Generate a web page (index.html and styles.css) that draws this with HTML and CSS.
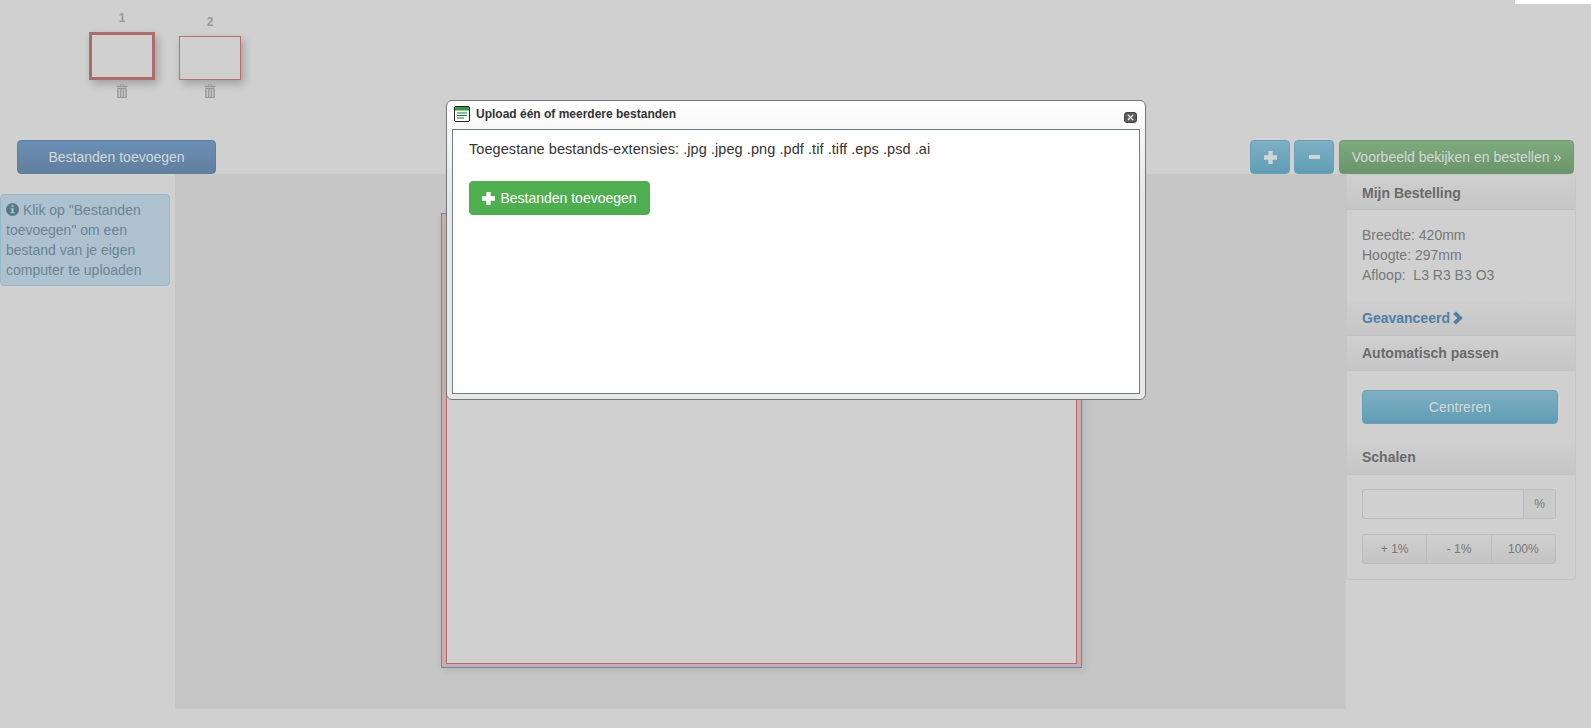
FILE: index.html
```html
<!DOCTYPE html>
<html lang="nl">
<head>
  <meta charset="UTF-8" />
  <meta name="viewport" content="width=device-width, initial-scale=1.0"/>
  <title>Bestanden uploaden</title>
  <link rel="stylesheet" href="styles.css">
</head>
<body>
  <div class="corner-tab"></div>

  <div class="thumbs">
    <div class="thumb">
      <span class="thumb-num">1</span>
      <div class="thumb-page thumb-active"></div>
      <svg class="trash" viewBox="0 0 12 14"><path d="M4 0.5h4v1.2h3.5v1.3H0.5V1.7H4zM5 1v.7h2V1zM1.2 3.8h9.6V14H1.2zM2.6 5v8h1.2V5zM5.4 5v8h1.2V5zM8.2 5v8h1.2V5z" fill-rule="evenodd"/></svg>
    </div>
    <div class="thumb">
      <span class="thumb-num">2</span>
      <div class="thumb-page thumb-small"></div>
      <svg class="trash" viewBox="0 0 12 14"><path d="M4 0.5h4v1.2h3.5v1.3H0.5V1.7H4zM5 1v.7h2V1zM1.2 3.8h9.6V14H1.2zM2.6 5v8h1.2V5zM5.4 5v8h1.2V5zM8.2 5v8h1.2V5z" fill-rule="evenodd"/></svg>
    </div>
  </div>

  <div class="toolbar">
    <button class="btn btn-blue btn-add">Bestanden toevoegen</button>
    <div class="toolbar-right">
      <button class="btn btn-info btn-zoom">
        <svg class="icon-plus" viewBox="1 1 12 12"><path d="M5 1h4v4h4v4H9v4H5V9H1V5h4z"/></svg>
      </button>
      <button class="btn btn-info btn-zoom">
        <svg class="icon-minus" viewBox="0 0 11 4"><path d="M0 0h11v4H0z"/></svg>
      </button>
      <button class="btn btn-green btn-order">Voorbeeld bekijken en bestellen »</button>
    </div>
  </div>

  <div class="main">
    <div class="hint">
      <svg class="hint-icon" viewBox="0 0 14 14"><path fill-rule="evenodd" d="M7 0a7 7 0 1 1 0 14A7 7 0 0 1 7 0zM5.8 2.4v2h2.4v-2zM5 5.6v1.2h.9v3H5V11h4V9.8h-.9V5.6z"/></svg>
      Klik op "Bestanden toevoegen" om een bestand van je eigen computer te uploaden
    </div>

    <div class="canvas">
      <div class="sheet"><div class="sheet-inner"></div></div>
    </div>

    <div class="panel">
      <div class="panel-head panel-first">Mijn Bestelling</div>
      <div class="panel-body specs">
        <div>Breedte: 420mm</div>
        <div>Hoogte: 297mm</div>
        <div>Afloop:&nbsp; L3 R3 B3 O3</div>
      </div>
      <div class="panel-head panel-link">Geavanceerd
        <svg viewBox="0 0 10 14"><path d="M3 0.4L9.8 7 3 13.6 0.2 11 4.4 7 0.2 3z"/></svg>
      </div>
      <div class="panel-head">Automatisch passen</div>
      <div class="panel-body center-body">
        <button class="btn btn-info btn-center">Centreren</button>
      </div>
      <div class="panel-head">Schalen</div>
      <div class="panel-body scale-body">
        <div class="scale-input">
          <span class="scale-field"></span>
          <span class="scale-unit">%</span>
        </div>
        <div class="scale-btns">
          <span>+ 1%</span>
          <span>- 1%</span>
          <span>100%</span>
        </div>
      </div>
    </div>
  </div>

  <div class="modal">
    <div class="modal-title">
      <svg class="modal-icon" viewBox="0 0 16 16">
        <rect x="0.5" y="0.5" width="15" height="15" rx="1.5" fill="#fff" stroke="#222"/>
        <rect x="1" y="1" width="14" height="3.5" fill="#2f9e3f"/>
        <path d="M3 7h10M3 9.5h10M3 12h7" stroke="#1c7a2c" stroke-width="1.1"/>
      </svg>
      <span>Upload één of meerdere bestanden</span>
      <button class="modal-close">
        <svg viewBox="0 0 8 8"><path d="M1 1l6 6M7 1L1 7" stroke="#fff" stroke-width="1.5"/></svg>
      </button>
    </div>
    <div class="modal-body">
      <p class="extensions">Toegestane bestands-extensies: .jpg .jpeg .png .pdf .tif .tiff .eps .psd .ai</p>
      <button class="btn-upload">
        <svg viewBox="1 1 12 12"><path d="M5 1h4v4h4v4H9v4H5V9H1V5h4z"/></svg>
        Bestanden toevoegen
      </button>
    </div>
  </div>
</body>
</html>
```

FILE: styles.css
```css
body {
  margin: 0;
  height: 728px;
  overflow: hidden;
  background: #d0d0d0;
  font-family: "Liberation Sans", Arial, sans-serif;
  font-size: 14px;
  color: #666;
}
.corner-tab {
  position: absolute;
  top: 0;
  right: 0;
  width: 76px;
  height: 4px;
  background: #fff;
}

/* Thumbnails */
.thumbs {
  box-sizing: border-box;
  height: 140px;
  padding: 0 0 42px 89px;
  display: flex;
  align-items: flex-end;
  gap: 24px;
}
.thumb {
  display: flex;
  flex-direction: column;
  align-items: center;
}
.thumb-num {
  font-size: 12px;
  font-weight: bold;
  color: #999;
  line-height: 14px;
  margin-bottom: 7px;
}
.thumb-page {
  box-sizing: border-box;
  box-shadow: 3px 4px 8px rgba(0,0,0,0.22);
}
.thumb-active {
  width: 66px;
  height: 48px;
  border: 3px solid #ad6c6c;
}
.thumb-small {
  width: 62px;
  height: 44px;
  border: 1px solid #b56f6f;
}
.trash {
  width: 12px;
  height: 14px;
  margin-top: 4px;
  fill: #999;
}

/* Toolbar */
.toolbar {
  height: 34px;
  padding: 0 17px;
  display: flex;
  justify-content: space-between;
}
.toolbar-right {
  display: flex;
  gap: 4px;
}
.btn {
  box-sizing: border-box;
  height: 34px;
  padding: 0;
  border-radius: 4px;
  font-family: inherit;
  font-size: 14px;
  color: #d4d8da;
  display: flex;
  align-items: center;
  justify-content: center;
}
.btn-blue {
  background: linear-gradient(#6a8fb5, #607f9e);
  border: 1px solid #5f7f9f;
}
.btn-info {
  background: linear-gradient(#7fb0c4, #5f9db5);
  border: 1px solid #68a0b5;
}
.btn-green {
  background: linear-gradient(#7eab7e, #6b946b);
  border: 1px solid #6f9a6f;
}
.btn-add { width: 199px; }
.btn-zoom { width: 40px; }
.btn-zoom svg { fill: #d0d6d8; }
.icon-plus {
  width: 13px;
  height: 13px;
}
.icon-minus {
  width: 11px;
  height: 4px;
}
.btn-order {
  width: 235px;
  margin-left: 1px;
}

/* Main row */
.main {
  height: 535px;
  display: flex;
}
.hint {
  box-sizing: border-box;
  width: 170px;
  height: 92px;
  margin-top: 20px;
  padding: 5px 5px;
  background: #adc2ce;
  border: 1px solid #95b9c9;
  border-radius: 4px;
  line-height: 20px;
  color: #6b8494;
}
.hint-icon {
  width: 13px;
  height: 13px;
  fill: #55788c;
  vertical-align: -1px;
}
.canvas {
  box-sizing: border-box;
  width: 1171px;
  margin-left: 5px;
  padding: 39px 0 0 266px;
  background: #c6c6c6;
}
.sheet {
  box-sizing: border-box;
  width: 641px;
  height: 455px;
  padding: 3px 4px;
  background: #c9acac;
  border: 1px solid #5a8cbc;
  box-shadow: 2px 2px 8px rgba(0,0,0,0.1);
}
.sheet-inner {
  box-sizing: border-box;
  height: 100%;
  background: #d0d0d0;
  border: 1px solid #b06a6a;
}

/* Order panel */
.panel {
  box-sizing: border-box;
  width: 230px;
  height: 406px;
  border: 1px solid #c6c6c6;
  border-radius: 4px;
  overflow: hidden;
}
.panel-head {
  box-sizing: border-box;
  height: 35px;
  padding-left: 15px;
  display: flex;
  align-items: center;
  gap: 3px;
  font-weight: bold;
  color: #6a6a6a;
  background: linear-gradient(#cfcfcf, #c6c6c6);
  border-bottom: 1px solid #c2c2c2;
}
.panel-first { padding-top: 2px; }
.panel-link { color: #4f7ea8; }
.panel-link svg {
  width: 10px;
  height: 14px;
  fill: #4f7ea8;
}
.panel-body { padding: 0 15px; }
.specs {
  height: 91px;
  padding-top: 15px;
  box-sizing: border-box;
  line-height: 20px;
  color: #777;
}
.center-body {
  height: 69px;
  padding-top: 19px;
  box-sizing: border-box;
}
.btn-center { width: 196px; }
.scale-body { padding-top: 14px; }
.scale-input {
  width: 194px;
  height: 30px;
  box-sizing: border-box;
  display: flex;
  border: 1px solid #bcbcbc;
  border-radius: 3px;
}
.scale-field { flex: 1; }
.scale-unit {
  width: 31px;
  border-left: 1px solid #bcbcbc;
  background: #cbcbcb;
  display: flex;
  align-items: center;
  justify-content: center;
  font-size: 12px;
  color: #777;
}
.scale-btns {
  width: 194px;
  height: 30px;
  box-sizing: border-box;
  margin-top: 15px;
  display: flex;
  border: 1px solid #bcbcbc;
  border-radius: 3px;
  background: linear-gradient(#cfcfcf, #c4c4c4);
}
.scale-btns span {
  flex: 1;
  display: flex;
  align-items: center;
  justify-content: center;
  font-size: 12px;
  color: #777;
}
.scale-btns span + span { border-left: 1px solid #bcbcbc; }

/* Upload dialog */
.modal {
  position: absolute;
  top: 100px;
  left: 446px;
  box-sizing: border-box;
  width: 700px;
  height: 300px;
  padding: 0 5px 5px;
  display: flex;
  flex-direction: column;
  background: linear-gradient(#fff, #e8e8e8 30%);
  border: 1px solid #777;
  border-radius: 6px;
}
.modal-title {
  box-sizing: border-box;
  height: 28px;
  flex: none;
  padding: 0 3px 2px 2px;
  display: flex;
  align-items: center;
  gap: 6px;
  font-size: 12px;
  font-weight: bold;
  color: #333;
}
.modal-icon {
  width: 16px;
  height: 16px;
}
.modal-close {
  margin-left: auto;
  margin-top: 7px;
  width: 13px;
  height: 11px;
  padding: 0;
  background: #5c5c5c;
  border: 1px solid #444;
  border-radius: 3px;
  display: flex;
  align-items: center;
  justify-content: center;
}
.modal-close svg {
  width: 7px;
  height: 7px;
}
.modal-body {
  flex: 1;
  box-sizing: border-box;
  padding: 0 16px;
  background: #fff;
  border: 1px solid #6f8088;
}
.extensions {
  margin: 9px 0 22px;
  font-size: 14.5px;
  letter-spacing: 0.07px;
  line-height: 20px;
  color: #333;
}
.btn-upload {
  box-sizing: border-box;
  width: 181px;
  height: 34px;
  padding: 0;
  background: #4fae4f;
  border: 1px solid #4cae4c;
  border-radius: 4px;
  color: #fff;
  font-family: inherit;
  font-size: 14px;
  display: flex;
  align-items: center;
  justify-content: center;
  gap: 5px;
}
.btn-upload svg {
  width: 13px;
  height: 13px;
  fill: #fff;
}
```
